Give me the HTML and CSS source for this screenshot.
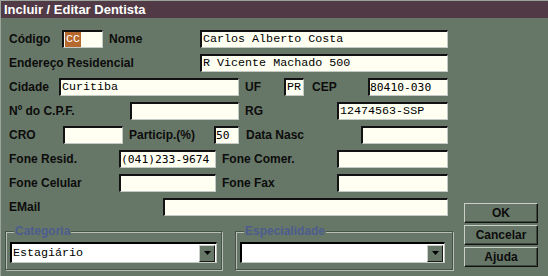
FILE: index.html
```html
<!DOCTYPE html>
<html lang="pt">
<head>
<meta charset="utf-8">
<title>Incluir / Editar Dentista</title>
<link rel="stylesheet" href="styles.css">
</head>
<body>
<div class="window">
  <div class="titlebar">Incluir / Editar Dentista</div>
  <div class="content">
    <div class="left">
      <div class="form">
        <div class="row">
          <span class="lbl w53">Código</span>
          <span class="field w41"><span class="sel">CC</span></span>
          <span class="lbl ml6 w91">Nome</span>
          <span class="field w248">Carlos Alberto Costa</span>
        </div>
        <div class="row">
          <span class="lbl w191">Endereço Residencial</span>
          <span class="field w248">R Vicente Machado 500</span>
        </div>
        <div class="row">
          <span class="lbl w50">Cidade</span>
          <span class="field w180">Curitiba</span>
          <span class="lbl ml6 w39">UF</span>
          <span class="field w20">PR</span>
          <span class="lbl ml8 w56">CEP</span>
          <span class="field w80 sans">80410-030</span>
        </div>
        <div class="row">
          <span class="lbl w121">Nº do C.P.F.</span>
          <span class="field w109"></span>
          <span class="lbl ml6 w92">RG</span>
          <span class="field w111">12474563-SSP</span>
        </div>
        <div class="row">
          <span class="lbl w54">CRO</span>
          <span class="field w60"></span>
          <span class="lbl ml6 w85">Particip.(%)</span>
          <span class="field w25 sans">50</span>
          <span class="lbl ml7 w115">Data Nasc</span>
          <span class="field w87"></span>
        </div>
        <div class="row">
          <span class="lbl w110">Fone Resid.</span>
          <span class="field w97 sans">(041)233-9674</span>
          <span class="lbl ml6 w115">Fone Comer.</span>
          <span class="field w111"></span>
        </div>
        <div class="row">
          <span class="lbl w110">Fone Celular</span>
          <span class="field w97"></span>
          <span class="lbl ml6 w115">Fone Fax</span>
          <span class="field w111"></span>
        </div>
        <div class="row row-last">
          <span class="lbl w154">EMail</span>
          <span class="field w285"></span>
        </div>
      </div>
      <div class="groups">
        <div class="group g-cat">
          <span class="legend">Categoria</span>
          <div class="combo">
            <span class="combo-text">Estagiário</span>
            <span class="drop"><svg width="7" height="4" viewBox="0 0 7 4"><path d="M0 0H7L3.5 4Z" fill="#000"/></svg></span>
          </div>
        </div>
        <div class="group g-esp">
          <span class="legend">Especialidade</span>
          <div class="combo">
            <span class="combo-text"></span>
            <span class="drop"><svg width="7" height="4" viewBox="0 0 7 4"><path d="M0 0H7L3.5 4Z" fill="#000"/></svg></span>
          </div>
        </div>
      </div>
    </div>
    <div class="buttons">
      <div class="btn">OK</div>
      <div class="btn">Cancelar</div>
      <div class="btn">Ajuda</div>
    </div>
  </div>
</div>
</body>
</html>
```
FILE: styles.css
```css
* { box-sizing: border-box; }
html, body { margin: 0; padding: 0; }
body {
  background: #677767;
  font-family: "Liberation Sans", Arial, sans-serif;
}
.window {
  width: 548px;
  height: 276px;
  background: #677767;
  border-top: 1px solid #9aa49a;
  border-left: 1px solid #9aa49a;
  overflow: hidden;
}
.titlebar {
  height: 17px;
  background: #513a45;
  color: #ffffff;
  font-weight: bold;
  font-size: 13px;
  line-height: 17px;
  padding-left: 3px;
}
.content {
  display: flex;
}
.left {
  width: 463px;
}
.form {
  padding: 12px 0 0 8px;
}
.row {
  display: flex;
  align-items: center;
  height: 18px;
  margin-bottom: 6px;
}
.row-last { margin-top: 2px; margin-bottom: 0; }
.lbl {
  font-weight: bold;
  font-size: 12px;
  color: #0c0c0c;
  white-space: nowrap;
  line-height: 18px;
}
.field {
  height: 18px;
  background: #fffff2;
  border-style: solid;
  border-width: 2px 1px 1px 2px;
  border-color: #121212 #c4cac4 #c4cac4 #121212;
  font-family: "Liberation Mono", "Courier New", monospace;
  font-size: 11.7px;
  line-height: 15px;
  color: #000;
  padding-left: 1px;
  white-space: nowrap;
  overflow: hidden;
}
.field.sans {
  font-family: "DejaVu Sans Mono", monospace;
  font-size: 11.3px;
  padding-left: 0;
}
.sel {
  display: inline-block;
  background: #b5692e;
  color: #fff;
  padding: 0 1px;
  line-height: 15px;
}
.ml6 { margin-left: 6px; }
.ml7 { margin-left: 7px; }
.ml8 { margin-left: 8px; }
.w20 { width: 20px; }
.w25 { width: 25px; }
.w39 { width: 39px; }
.w41 { width: 41px; }
.w50 { width: 50px; }
.w53 { width: 53px; }
.w54 { width: 54px; }
.w56 { width: 56px; }
.w60 { width: 60px; }
.w80 { width: 80px; }
.w85 { width: 85px; }
.w87 { width: 87px; }
.w91 { width: 91px; }
.w92 { width: 92px; }
.w97 { width: 97px; }
.w109 { width: 109px; }
.w110 { width: 110px; }
.w111 { width: 111px; }
.w115 { width: 115px; }
.w121 { width: 121px; }
.w154 { width: 154px; }
.w180 { width: 180px; }
.w191 { width: 191px; }
.w248 { width: 248px; }
.w285 { width: 285px; }

.groups {
  display: flex;
  margin-top: 15px;
  padding-left: 4px;
}
.group {
  position: relative;
  height: 39px;
  border: 1px solid #475347;
  box-shadow: inset 1px 1px 0 #b6beb6, 1px 1px 0 #b6beb6;
  padding: 10px 0 0 4px;
}
.g-cat { width: 217px; }
.g-esp { width: 218px; margin-left: 13px; }
.legend {
  position: absolute;
  left: 8px;
  top: -8px;
  padding: 0 1px;
  background: #677767;
  color: #4c5d8e;
  font-weight: bold;
  font-size: 12px;
  line-height: 14px;
}
.combo {
  display: flex;
  align-items: center;
  height: 21px;
  background: #ffffff;
  border-style: solid;
  border-width: 2px 1px 1px 2px;
  border-color: #000 #c4cac4 #c4cac4 #000;
  padding-right: 1px;
}
.g-cat .combo { width: 207px; }
.g-esp .combo { width: 205px; }
.combo-text {
  flex: 1;
  font-family: "Liberation Mono", "Courier New", monospace;
  font-size: 11.7px;
  padding-left: 1px;
  color: #000;
}
.drop {
  width: 16px;
  height: 17px;
  background: #677767;
  border-style: solid;
  border-width: 1px;
  border-color: #c8d0c8 #1a1a1a #1a1a1a #c8d0c8;
  display: flex;
  align-items: center;
  justify-content: center;
}
.buttons {
  display: flex;
  flex-direction: column;
  gap: 2px;
  padding-top: 185px;
}
.btn {
  width: 74px;
  height: 20px;
  border-style: solid;
  border-width: 1px;
  border-color: #c8d0c8 #111 #111 #c8d0c8;
  box-shadow: inset -1px -1px 0 #3e4a3e;
  font-weight: bold;
  font-size: 12px;
  color: #0c0c0c;
  text-align: center;
  line-height: 18px;
}
```
